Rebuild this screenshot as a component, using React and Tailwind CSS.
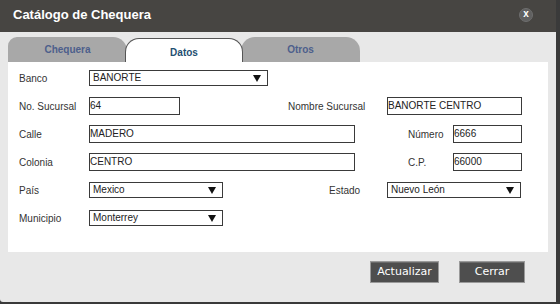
import React from 'react';

const sans = "font-['Liberation_Sans',Arial,sans-serif]";

function Arrow() {
  return (
    <svg width="8" height="7" viewBox="0 0 8 7" className="shrink-0">
      <path d="M0 0 H8 L4 7 Z" fill="#111" />
    </svg>
  );
}

function Label({ children, className = '' }) {
  return <div className={`shrink-0 text-[10px] text-[#333] ${className}`}>{children}</div>;
}

function Field({ value, w }) {
  return (
    <div className={`${w} h-[18px] shrink-0 border border-[#3a3a3a] bg-white flex items-center text-[10px] text-[#222] leading-none`}>
      {value}
    </div>
  );
}

function Select({ value, w }) {
  return (
    <div className={`${w} h-[16px] shrink-0 border border-[#3a3a3a] bg-white flex items-center justify-between pl-[3px] pr-[6px] text-[10px] text-[#222] leading-none`}>
      <span>{value}</span>
      <Arrow />
    </div>
  );
}

function Row({ children }) {
  return <div className="h-[28px] flex items-center">{children}</div>;
}

export default function App() {
  return (
    <div className={`w-[560px] h-[304px] bg-[#3a3a3a] overflow-hidden ${sans}`}>
      <div className="w-[556px] h-[302px] bg-[#e8e8e8] rounded-bl-[3px] flex flex-col">
        {/* title bar */}
        <div className="h-[32px] bg-[#474542] flex items-center justify-between pl-[13px] pr-[23px] pb-[3px]">
          <span className="text-white font-bold text-[13px]">Catálogo de Chequera</span>
          <div className="w-[14px] h-[14px] rounded-full bg-[#606060] border border-[#6e6e6e] flex items-center justify-center text-white font-bold text-[10px] leading-none pb-px">
            x
          </div>
        </div>

        <div className="flex flex-col px-[8px]">
          {/* tabs */}
          <div className="h-[25px] mt-[5px] flex items-end font-bold text-[10px]">
            <div className="w-[119px] h-[25px] bg-[#a8a8a8] rounded-tl-[9px] rounded-tr-[14px] flex justify-center pt-[5px] text-[#4d5f8c]">
              Chequera
            </div>
            <div className="relative z-10 -ml-[2px] w-[118px] h-[24px] bg-white border border-b-0 border-[#555] rounded-t-[14px] flex justify-center pt-[6px] text-[#1f4f72]">
              Datos
            </div>
            <div className="-ml-[2px] w-[119px] h-[25px] bg-[#a8a8a8] rounded-tl-[14px] rounded-tr-[14px] flex justify-center pt-[5px] text-[#4d5f8c]">
              Otros
            </div>
          </div>

          {/* panel */}
          <div className="w-[540px] h-[190px] bg-white pl-[11px] pt-[2px] flex flex-col">
            <Row>
              <Label className="w-[70px]">Banco</Label>
              <Select value="BANORTE" w="w-[179px]" />
            </Row>
            <Row>
              <Label className="w-[70px]">No. Sucursal</Label>
              <Field value="64" w="w-[91px]" />
              <Label className="ml-[108px] w-[99px]">Nombre Sucursal</Label>
              <Field value="BANORTE CENTRO" w="w-[135px]" />
            </Row>
            <Row>
              <Label className="w-[70px]">Calle</Label>
              <Field value="MADERO" w="w-[266px]" />
              <Label className="ml-[53px] w-[45px]">Número</Label>
              <Field value="6666" w="w-[69px]" />
            </Row>
            <Row>
              <Label className="w-[70px]">Colonia</Label>
              <Field value="CENTRO" w="w-[266px]" />
              <Label className="ml-[53px] w-[45px]">C.P.</Label>
              <Field value="66000" w="w-[69px]" />
            </Row>
            <Row>
              <Label className="w-[70px]">País</Label>
              <Select value="Mexico" w="w-[134px]" />
              <Label className="ml-[106px] w-[58px]">Estado</Label>
              <Select value="Nuevo León" w="w-[134px]" />
            </Row>
            <Row>
              <Label className="w-[70px]">Municipio</Label>
              <Select value="Monterrey" w="w-[134px]" />
            </Row>
          </div>

          {/* buttons */}
          <div className="mt-[9px] flex justify-end gap-[20px] pr-[23px] font-['DejaVu_Sans',sans-serif] text-[11px] text-white">
            <div className="w-[69px] h-[22px] bg-[#4e4e4e] border border-[#9a9a9a] shadow-[inset_0_1px_0_#6a6a6a] flex items-center justify-center">
              Actualizar
            </div>
            <div className="w-[66px] h-[22px] bg-[#4e4e4e] border border-[#9a9a9a] shadow-[inset_0_1px_0_#6a6a6a] flex items-center justify-center">
              Cerrar
            </div>
          </div>
        </div>
      </div>
    </div>
  );
}
